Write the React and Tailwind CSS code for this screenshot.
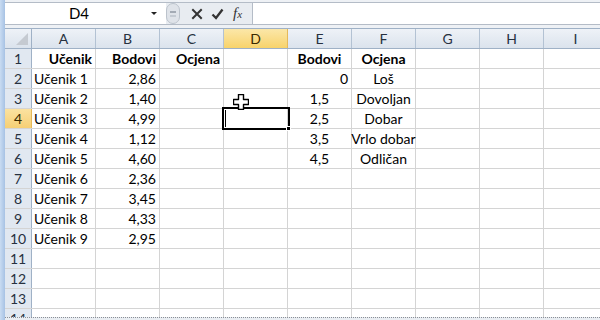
import React from 'react';

const COLS = ['A', 'B', 'C', 'D', 'E', 'F', 'G', 'H', 'I'];

const DATA = {
  1: {
    A: { t: 'Učenik', b: true, al: 'r' },
    B: { t: 'Bodovi', b: true, al: 'r' },
    C: { t: 'Ocjena', b: true, al: 'r' },
    E: { t: 'Bodovi', b: true, al: 'c' },
    F: { t: 'Ocjena', b: true, al: 'c' },
  },
  2: { A: { t: 'Učenik 1' }, B: { t: '2,86', al: 'r' }, E: { t: '0', al: 'r' }, F: { t: 'Loš', al: 'c' } },
  3: { A: { t: 'Učenik 2' }, B: { t: '1,40', al: 'r' }, E: { t: '1,5', al: 'c' }, F: { t: 'Dovoljan', al: 'c' } },
  4: { A: { t: 'Učenik 3' }, B: { t: '4,99', al: 'r' }, E: { t: '2,5', al: 'c' }, F: { t: 'Dobar', al: 'c' } },
  5: { A: { t: 'Učenik 4' }, B: { t: '1,12', al: 'r' }, E: { t: '3,5', al: 'c' }, F: { t: 'Vrlo dobar', al: 'c' } },
  6: { A: { t: 'Učenik 5' }, B: { t: '4,60', al: 'r' }, E: { t: '4,5', al: 'c' }, F: { t: 'Odličan', al: 'c' } },
  7: { A: { t: 'Učenik 6' }, B: { t: '2,36', al: 'r' } },
  8: { A: { t: 'Učenik 7' }, B: { t: '3,45', al: 'r' } },
  9: { A: { t: 'Učenik 8' }, B: { t: '4,33', al: 'r' } },
  10: { A: { t: 'Učenik 9' }, B: { t: '2,95', al: 'r' } },
};

const ROWS = [1, 2, 3, 4, 5, 6, 7, 8, 9, 10, 11, 12, 13, 14];

function alignClass(al) {
  if (al === 'r') return 'justify-end pr-[3px]';
  if (al === 'c') return 'justify-center';
  return 'justify-start pl-[2px]';
}

function Cell({ row, col }) {
  const d = DATA[row] && DATA[row][col];
  const selected = row === 4 && col === 'D';
  return (
    <div className={`relative w-[64px] shrink-0 h-full border-r border-[#d4d4d4] flex items-end pb-[1px] ${d ? alignClass(d.al) : ''}`}>
      {d && (
        <span className={`whitespace-nowrap text-[14px] leading-[17px] text-black ${d.b ? 'font-bold' : ''}`}>{d.t}</span>
      )}
      {selected && (
        <>
          <div className="absolute left-[-2px] top-[-2px] w-[68px] h-[23px] border-2 border-black z-10" />
          <div className="absolute left-[1px] top-[1px] w-[1px] h-[17px] bg-black z-10" />
          <div className="absolute right-[-4px] bottom-[-3px] w-[5px] h-[5px] bg-black border border-white z-20" />
          <svg className="absolute left-[9px] top-[-15px] z-30" width="16" height="16" viewBox="0 0 16 16">
            <path d="M5.5 0.5 H10.5 V5.5 H15.5 V10.5 H10.5 V15.5 H5.5 V10.5 H0.5 V5.5 H5.5 Z" fill="white" stroke="black" strokeWidth="1.4" strokeLinejoin="round" />
          </svg>
        </>
      )}
    </div>
  );
}

export default function App() {
  return (
    <div className="w-[600px] h-[320px] overflow-hidden flex bg-white font-['Lato',sans-serif]">
      <div className="w-[5px] shrink-0 bg-gradient-to-r from-[#c9dcf2] to-[#a7c2e4]" />
      <div className="flex-1 min-w-0 flex flex-col overflow-hidden">
        {/* formula bar */}
        <div className="h-[28px] shrink-0 bg-[#eef1f5] pt-[2px]">
          <div className="h-[23px] flex border-y border-[#b4bcc7] bg-white">
            <div className="w-[157px] shrink-0 flex items-center">
              <div className="flex-1 text-center text-[15px] leading-none text-black pl-[6px]">D4</div>
              <svg width="14" height="8" viewBox="0 0 14 8" className="shrink-0 mr-[1px]">
                <path d="M4 2 H10 L7 5 Z" fill="#222" />
              </svg>
            </div>
            <div className="w-[4px] shrink-0" />
            <div className="w-[86px] shrink-0 flex items-center bg-[#e8ecf1]">
              <div className="w-[14px] h-[21px] rounded-full bg-[#dfe3e9] border border-[#bcc3cc] flex flex-col items-center justify-center gap-[2px]">
                <div className="w-[6px] h-[2px] bg-[#a3aab4]" />
                <div className="w-[6px] h-[2px] bg-[#c4cad2]" />
              </div>
              <svg width="12" height="12" viewBox="0 0 12 12" className="ml-[11px]">
                <path d="M2 2 L10 10 M10 2 L2 10" stroke="#333" strokeWidth="2" strokeLinecap="square" />
              </svg>
              <svg width="13" height="12" viewBox="0 0 13 12" className="ml-[8px]">
                <path d="M1.5 6.5 L5 10 L11.5 1.5" stroke="#333" strokeWidth="2.3" fill="none" />
              </svg>
              <span className="ml-[9px] font-['Liberation_Serif',serif] italic text-[15px] leading-none text-[#333]">f<span className="text-[11px]">x</span></span>
            </div>
            <div className="flex-1 border-l border-[#b4bcc7] bg-white" />
          </div>
        </div>

        {/* column headers */}
        <div className="h-[21px] shrink-0 flex border-y border-[#9fb1c6] bg-gradient-to-b from-[#eef2f7] to-[#dbe3ed]">
          <div className="w-[27px] shrink-0 h-full border-r border-[#9fb1c6] relative">
            <svg className="absolute right-[3px] bottom-[3px]" width="12" height="12" viewBox="0 0 12 12">
              <path d="M12 0 L12 12 L0 12 Z" fill="#c5cad1" />
            </svg>
          </div>
          {COLS.map((c) => (
            <div
              key={c}
              className={`w-[64px] shrink-0 h-full border-r flex items-center justify-center text-[14px] leading-none ${
                c === 'D'
                  ? 'bg-gradient-to-b from-[#fbe7a8] to-[#f8d36a] border-[#e5b95a] text-[#3a2a00]'
                  : 'border-[#b3c2d3] text-[#27313f]'
              }`}
            >
              {c}
            </div>
          ))}
        </div>

        {/* rows */}
        <div className="flex-1 min-h-0 overflow-hidden flex flex-col">
          {ROWS.map((r) => (
            <div key={r} className="h-[20px] shrink-0 flex border-b border-[#d4d4d4]">
              <div
                className={`w-[27px] shrink-0 h-full border-r flex items-center justify-center text-[14px] leading-none ${
                  r === 4
                    ? 'bg-gradient-to-b from-[#fbe2a0] to-[#f6cf74] border-[#e5b95a] text-[#3a2a00]'
                    : 'bg-[#e1e8f1] border-[#9fb1c6] text-[#27313f]'
                }`}
              >
                {r}
              </div>
              {COLS.map((c) => (
                <Cell key={c} row={r} col={c} />
              ))}
            </div>
          ))}
        </div>

        {/* bottom bar */}
        <div className="h-[3px] shrink-0 border-t border-dotted border-[#8a8f96] bg-[#e9edf2]" />
      </div>
    </div>
  );
}
